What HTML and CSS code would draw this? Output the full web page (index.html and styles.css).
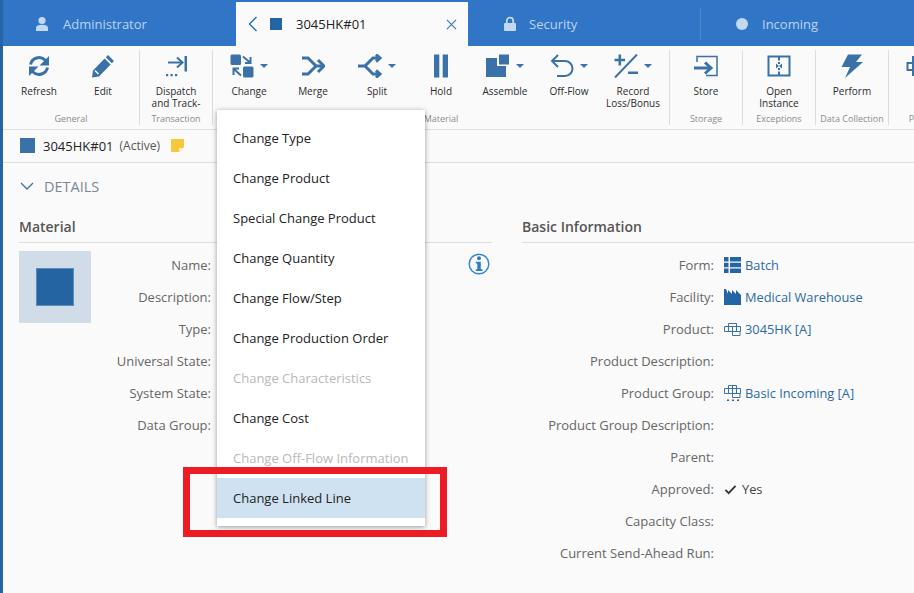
FILE: index.html
```html
<!DOCTYPE html>
<html lang="en">
<head>
<meta charset="utf-8">
<title>3045HK#01</title>
<link rel="stylesheet" href="styles.css">
</head>
<body>
<div class="app">
  <nav class="tabs">
    <div class="tab">
      <svg class="tab-icon" viewBox="0 0 16 16"><circle cx="8" cy="4.500" r="3.600"/><path d="M2 15v-3c0-2 2-3.200 6-3.200s6 1.200 6 3.200v3z"/></svg>
      <span>Administrator</span>
    </div>
    <div class="tab tab-active">
      <svg class="tab-back" viewBox="0 0 10 16"><path d="M8.500 1 1.500 8l7 7"/></svg>
      <span class="tab-square"></span>
      <span class="tab-title">3045HK#01</span>
      <svg class="tab-close" viewBox="0 0 12 12"><path d="M1 1l10 10M11 1 1 11"/></svg>
    </div>
    <div class="tab tab-security">
      <svg class="tab-icon" viewBox="0 0 16 16"><path d="M3 7h10a1 1 0 0 1 1 1v6a1 1 0 0 1-1 1H3a1 1 0 0 1-1-1V8a1 1 0 0 1 1-1z"/><path class="lock" d="M4.800 7V4.800a3.200 3.200 0 0 1 6.400 0V7"/></svg>
      <span>Security</span>
    </div>
    <div class="tab tab-incoming">
      <svg class="tab-icon" viewBox="0 0 16 16"><circle cx="8" cy="8" r="6"/></svg>
      <span>Incoming</span>
    </div>
  </nav>

  <section class="ribbon">
    <div class="group">
      <div class="buttons">
        <div class="btn">
          <div class="btn-icon"><svg class="ico" viewBox="0 0 24 24"><path class="s3" d="M3.500 10.500A8.700 8.700 0 0 1 18 6l2.500 3"/><path d="M22 2v9.500H12.500z"/><path class="s3" d="M20.500 13.500A8.700 8.700 0 0 1 6 18l-2.500-3"/><path d="M2 22v-9.500H11.500z"/></svg></div>
          <div class="btn-label">Refresh</div>
        </div>
        <div class="btn">
          <div class="btn-icon"><svg class="ico" viewBox="0 0 24 24"><path d="M17 1 23 7l-2.200 2.200-6-6zM13.600 4.600 19.600 10.600 8 22.500 1 23.500l1-7z"/><path class="cut" d="M4 16.500 7.500 20"/></svg></div>
          <div class="btn-label">Edit</div>
        </div>
      </div>
      <div class="group-label">General</div>
    </div>

    <div class="group">
      <div class="buttons">
        <div class="btn">
          <div class="btn-icon"><svg class="ico" viewBox="0 0 24 24"><path class="s2" d="M4 8.500h14.500"/><path class="s2" d="M13 3.500l5.500 5-5.500 5"/><path d="M20.500 2H23v15.500h-2.500z"/><path d="M2 20h2.200v2.200H2zM6.500 20h2.200v2.200H6.500zM11 20h2.200v2.200H11z"/></svg></div>
          <div class="btn-label">Dispatch<br>and Track-</div>
        </div>
      </div>
      <div class="group-label">Transaction</div>
    </div>

    <div class="group group-material">
      <div class="buttons">
        <div class="btn">
          <div class="btn-icon"><svg class="ico" viewBox="0 0 24 24"><rect x=".5" y=".5" width="10.500" height="10.500" rx="1.500"/><rect x="13" y="12.500" width="10.500" height="11" rx="1.500"/><path class="s2" d="M13 2.500l7 6M20.500 3v6H15M11 21.500l-7-6.500M3.500 21v-6.500H9"/></svg><span class="caret"></span></div>
          <div class="btn-label">Change</div>
        </div>
        <div class="btn">
          <div class="btn-icon"><svg class="ico" viewBox="0 0 24 24"><path class="s3" d="M1 4h6l8 8-8 8H1"/><path class="s3" d="M15 12h7"/><path class="s3" d="M17 6l6 6-6 6"/></svg></div>
          <div class="btn-label">Merge</div>
        </div>
        <div class="btn">
          <div class="btn-icon"><svg class="ico" viewBox="0 0 24 24"><path class="s3" d="M0 12h7l8-8h7M7 12l8 8h7"/><path class="s3" d="M18 .5 22 4l-4 3.500M18 16.500l4 3.500-4 3.500"/></svg><span class="caret"></span></div>
          <div class="btn-label">Split</div>
        </div>
        <div class="btn">
          <div class="btn-icon"><svg class="ico" viewBox="0 0 24 24"><path d="M5 .5h5.300v23H5zM13.700 .5H19v23h-5.300z"/></svg></div>
          <div class="btn-label">Hold</div>
        </div>
        <div class="btn">
          <div class="btn-icon"><svg class="ico" viewBox="0 0 24 24"><path d="M0 4h11v8h9v11H0z"/><path d="M13 .5h10v10H13z"/></svg><span class="caret"></span></div>
          <div class="btn-label">Assemble</div>
        </div>
        <div class="btn">
          <div class="btn-icon"><svg class="ico" viewBox="0 0 24 24"><path class="s2" d="M2 7h13a7.500 7.500 0 0 1 0 15H7"/><path class="s2" d="M8 1 2 7l6 6"/></svg><span class="caret"></span></div>
          <div class="btn-label">Off-Flow</div>
        </div>
        <div class="btn">
          <div class="btn-icon"><svg class="ico" viewBox="0 0 24 24"><path class="s2" d="M1 23.500 23 .5"/><path d="M4.500 .5h2.600v4.200h4v2.600h-4v4.200H4.500V7.300H.5V4.700h4zM14 17.500h10v2.500H14z"/></svg><span class="caret"></span></div>
          <div class="btn-label">Record<br>Loss/Bonus</div>
        </div>
      </div>
      <div class="group-label">Material</div>
    </div>

    <div class="group">
      <div class="buttons">
        <div class="btn">
          <div class="btn-icon"><svg class="ico" viewBox="0 0 24 24"><path class="s15" d="M3 8V2.500h20v19H12"/><path class="s3" d="M0 14h16"/><path class="s3" d="M11 8.500l6 5.500-6 5.500"/></svg></div>
          <div class="btn-label">Store</div>
        </div>
      </div>
      <div class="group-label">Storage</div>
    </div>

    <div class="group">
      <div class="buttons">
        <div class="btn">
          <div class="btn-icon"><svg class="ico" viewBox="0 0 24 24"><path class="s2" d="M1.500 2.500h21v19h-21z"/><path d="M11 3h2v3.500h-2zM11 8h2v2h-2zM11 14h2v2h-2zM11 17.500h2V21h-2z"/><path d="M9 9.500 12 12l-3 2.500zM15 9.500 12 12l3 2.500z"/></svg></div>
          <div class="btn-label">Open<br>Instance</div>
        </div>
      </div>
      <div class="group-label">Exceptions</div>
    </div>

    <div class="group">
      <div class="buttons">
        <div class="btn">
          <div class="btn-icon"><svg class="ico" viewBox="0 0 24 24"><path d="M8 .5h14l-6 7.500h7L5 24l5-11H1.500z"/></svg></div>
          <div class="btn-label">Perform</div>
        </div>
      </div>
      <div class="group-label">Data Collection</div>
    </div>

    <div class="group group-last">
      <div class="buttons">
        <div class="btn">
          <div class="btn-icon"><svg class="ico" viewBox="0 0 24 24"><path class="s2" d="M7 3h11v18H7zM1.500 9h21v7h-21z"/></svg><span class="caret"></span></div>
          <div class="btn-label"></div>
        </div>
      </div>
      <div class="group-label">Process</div>
    </div>
  </section>

  <div class="status">
    <span class="status-square"></span>
    <span class="status-name">3045HK#01</span>
    <span class="status-state">(Active)</span>
    <svg class="note" viewBox="0 0 13 13"><path class="note-fill" d="M1 0h12v8l-5 5H1a1 1 0 0 1-1-1V1a1 1 0 0 1 1-1z"/><path class="note-fold" d="M8 9h4l-4 3.500z"/></svg>
  </div>

  <div class="details-head">
    <svg class="chevron" viewBox="0 0 14 8"><path d="M1 1l6 6 6-6"/></svg>
    <span>DETAILS</span>
  </div>

  <main class="columns">
    <section class="col-left">
      <h2 class="col-title">Material</h2>
      <div class="material">
        <div class="thumb"><span class="thumb-square"></span></div>
        <div class="rows rows-left">
          <div class="row"><span class="key">Name:</span></div>
          <div class="row"><span class="key">Description:</span></div>
          <div class="row"><span class="key">Type:</span></div>
          <div class="row"><span class="key">Universal State:</span></div>
          <div class="row"><span class="key">System State:</span></div>
          <div class="row"><span class="key">Data Group:</span></div>
        </div>
        <svg class="info" viewBox="0 0 22 22"><circle cx="11" cy="11" r="9.800"/><path class="info-i" d="M9 5.200a2 2 0 1 1 4 0 2 2 0 0 1-4 0zM7.800 8.800h5v7.400H14.500v1.800H7.800v-1.800h1.500v-5.600H7.800z"/></svg>
      </div>
    </section>

    <section class="col-right">
      <h2 class="col-title">Basic Information</h2>
      <div class="rows rows-right">
        <div class="row"><span class="key">Form:</span><span class="val">
          <svg class="val-icon" viewBox="0 0 17 16"><path d="M0 0h4.500v4.400H0zM6 0h11v4.400H6zM0 5.800h4.500v4.400H0zM6 5.800h11v4.400H6zM0 11.600h4.500V16H0zM6 11.600h11V16H6z"/></svg>Batch</span></div>
        <div class="row"><span class="key">Facility:</span><span class="val">
          <svg class="val-icon" viewBox="0 0 17 16"><path d="M0 0h2l2 5V1l4 4V1l4 4V1l5 5v10H0z"/></svg>Medical Warehouse</span></div>
        <div class="row"><span class="key">Product:</span><span class="val">
          <svg class="val-icon val-line" viewBox="0 0 17 13"><path d="M4.500.5h8v3h-8zM.5 3.500h16v5H.5zM4.500 3.500v5M8.500 3.500v9M12.500 3.500v5M8.500 12.500h7.500V8.500"/></svg>3045HK [A]</span></div>
        <div class="row"><span class="key">Product Description:</span></div>
        <div class="row"><span class="key">Product Group:</span><span class="val">
          <svg class="val-icon val-group" viewBox="0 0 17 16"><path d="M4.500.5h8v3h-8zM.5 3.500h16v5H.5zM4.500 3.500v5M8.500 .5v12M12.500 3.500v5M8.500 12.500h7.500V8.500"/><path class="dots" d="M3 14.500h2V16H3zM8 14.500h2V16H8zM13 14.500h2V16h-2z"/></svg>Basic Incoming [A]</span></div>
        <div class="row"><span class="key">Product Group Description:</span></div>
        <div class="row"><span class="key">Parent:</span></div>
        <div class="row"><span class="key">Approved:</span><span class="val val-plain">
          <svg class="check" viewBox="0 0 14 12"><path d="M1.500 6.500 5 10l7.500-8"/></svg>Yes</span></div>
        <div class="row"><span class="key">Capacity Class:</span></div>
        <div class="row"><span class="key">Current Send-Ahead Run:</span></div>
      </div>
    </section>
  </main>

  <div class="menu">
    <div class="menu-item">Change Type</div>
    <div class="menu-item">Change Product</div>
    <div class="menu-item">Special Change Product</div>
    <div class="menu-item">Change Quantity</div>
    <div class="menu-item">Change Flow/Step</div>
    <div class="menu-item">Change Production Order</div>
    <div class="menu-item is-disabled">Change Characteristics</div>
    <div class="menu-item">Change Cost</div>
    <div class="menu-item is-disabled">Change Off-Flow Information</div>
    <div class="menu-item is-active">Change Linked Line</div>
  </div>
  <div class="callout"></div>
</div>
</body>
</html>
```
FILE: styles.css
```css
* { box-sizing: border-box; }
html, body { margin: 0; padding: 0; }
body {
  width: 914px;
  height: 593px;
  overflow: hidden;
  font-family: "Open Sans", "Noto Sans", sans-serif;
  font-size: 13px;
  color: #333;
  background: #fafafa;
}
.app {
  position: relative;
  width: 914px;
  height: 593px;
  overflow: hidden;
  border-left: 3px solid #2465a4;
  background: #fafafa;
}

/* Tabs */
.tabs {
  display: flex;
  height: 46px;
  background: #3176c6;
  white-space: nowrap;
}
.tab {
  flex: 0 0 233px;
  display: flex;
  align-items: center;
  padding: 2px 0 0 31px;
  color: #bcd3ee;
  font-size: 13px;
}
.tab-icon {
  width: 16px;
  height: 16px;
  margin-right: 13px;
  fill: #c3d8f1;
}
.tab-icon .lock {
  fill: none;
  stroke: #c3d8f1;
  stroke-width: 1.800;
}
.tab-active {
  flex-basis: 232px;
  margin-top: 2px;
  padding: 0 11px 0 12px;
  background: #fafafa;
  color: #222;
}
.tab-back {
  width: 10px;
  height: 16px;
  fill: none;
  stroke: #2f72b8;
  stroke-width: 1.500;
  margin-right: 12px;
}
.tab-square {
  width: 12px;
  height: 12px;
  background: #2465a4;
  margin-right: 14px;
}
.tab-title { flex: 1; font-size: 13px; }
.tab-close {
  width: 11px;
  height: 11px;
  fill: none;
  stroke: #2f72b8;
  stroke-width: 1.100;
}
.tab-security { flex-basis: 232px; padding-left: 34px; }
.tab-security .tab-icon { margin-right: 11px; }
.tab-incoming {
  flex-basis: 214px;
  padding-left: 34px;
  position: relative;
}
.tab-incoming .tab-icon { margin-right: 12px; }
.tab-incoming::before {
  content: "";
  position: absolute;
  left: 0;
  top: 8px;
  bottom: 6px;
  width: 1px;
  background: #4d8ad0;
}

/* Ribbon */
.ribbon {
  display: flex;
  height: 84px;
  padding-top: 4px;
  background: #fafafa;
  border-bottom: 1px solid #dedede;
}
.group {
  flex: none;
  display: flex;
  flex-direction: column;
  padding: 0 4px;
  height: 75px;
  border-right: 1px solid #dcdcdc;
  text-align: center;
}
.group-last { border-right: 0; }
.buttons { display: flex; flex: 1; }
.btn { width: 64px; }
.btn-icon {
  display: flex;
  align-items: center;
  justify-content: center;
  height: 24px;
  margin-top: 4px;
}
.ico {
  flex: none;
  width: 24px;
  height: 24px;
  fill: #3a72a8;
  stroke: none;
}
.ico .s2, .ico .s3, .ico .s15 {
  fill: none;
  stroke: #3a72a8;
}
.ico .s2 { stroke-width: 2; }
.ico .s3 { stroke-width: 3; }
.ico .s15 { stroke-width: 1.500; }
.ico .cut { fill: none; stroke: #fafafa; stroke-width: 1.500; }
.caret {
  flex: none;
  width: 0;
  height: 0;
  margin-left: 6px;
  border-left: 4px solid transparent;
  border-right: 4px solid transparent;
  border-top: 4px solid #3a72a8;
}
.btn-label {
  margin-top: 7px;
  font-size: 10px;
  line-height: 12px;
  color: #2b2b2b;
}
.group-label {
  height: 12px;
  font-size: 9px;
  line-height: 12px;
  color: #8a8a8a;
  white-space: nowrap;
}

/* Status */
.status {
  display: flex;
  align-items: center;
  height: 33px;
  padding: 0 0 1px 17px;
  border-bottom: 1px solid #dedede;
}
.status-square {
  width: 15px;
  height: 15px;
  background: #3a72a8;
  margin-right: 8px;
}
.status-name { font-size: 13px; color: #222; margin-right: 6px; }
.status-state { font-size: 12px; color: #555; margin-right: 11px; }
.note { width: 13px; height: 13px; }
.note-fill { fill: #f6c83e; }
.note-fold { fill: #fdf0c4; }

/* Details */
.details-head {
  display: flex;
  align-items: center;
  height: 48px;
  padding: 0 0 2px 17px;
  color: #7b8794;
  font-size: 14.500px;
}
.chevron {
  width: 14px;
  height: 8px;
  margin-right: 10px;
  fill: none;
  stroke: #3a72a8;
  stroke-width: 1.300;
}
.columns {
  display: flex;
  padding-left: 16px;
  gap: 30px;
}
.col-left { flex: 0 0 473px; }
.col-right { flex: 1; }
.col-title {
  margin: 0 0 8px;
  height: 32px;
  padding-top: 7px;
  border-bottom: 1px solid #dedede;
  font-size: 14px;
  line-height: 18px;
  font-weight: 600;
  color: #555;
}
.material { display: flex; align-items: flex-start; }
.thumb {
  flex: none;
  display: flex;
  align-items: center;
  justify-content: center;
  width: 72px;
  height: 72px;
  background: #d0dce8;
}
.thumb-square {
  width: 38px;
  height: 38px;
  background: #2464a3;
  border: 1px solid #5c8cbc;
}
.rows-left { width: 120px; }
.rows-left .key { width: 120px; }
.rows-right .key { width: 192px; }
.row {
  display: flex;
  align-items: center;
  height: 32px;
  margin-top: -2px;
  margin-bottom: 2px;
  white-space: nowrap;
  color: #666;
}
.key {
  flex: none;
  text-align: right;
  font-size: 13px;
}
.val {
  display: flex;
  align-items: center;
  margin-left: 10px;
  color: #2b6aa6;
  font-size: 12.800px;
}
.val-plain { color: #444; }
.val-icon {
  flex: none;
  width: 17px;
  height: 16px;
  margin-right: 4px;
  fill: #2465a4;
}
.val-line, .val-group {
  fill: none;
  stroke: #3a72a8;
  stroke-width: 1;
}
.val-line { height: 13px; }
.val-group .dots { fill: #2465a4; stroke: none; }
.check {
  width: 13px;
  height: 11px;
  margin-right: 5px;
  fill: none;
  stroke: #333;
  stroke-width: 2;
}
.info {
  margin: 2px 0 0 257px;
  width: 22px;
  height: 22px;
  flex: none;
  fill: none;
  stroke: #3385cf;
  stroke-width: 1.400;
}
.info .info-i { fill: #2d7cc4; stroke: none; }

/* Menu */
.menu {
  position: absolute;
  left: 214px;
  top: 110px;
  width: 208px;
  height: 416px;
  padding-top: 8px;
  background: #fff;
  box-shadow: 0 1px 5px rgba(0, 0, 0, 0.4);
}
.menu-item {
  display: flex;
  align-items: center;
  height: 40px;
  padding-left: 16px;
  font-size: 13px;
  color: #222;
}
.is-disabled { color: #b8b8b8; }
.is-active { background: #cfe2f1; }
.callout {
  position: absolute;
  left: 179.500px;
  top: 467px;
  width: 264.500px;
  height: 70px;
  border: 7px solid #ed1c24;
}
```
